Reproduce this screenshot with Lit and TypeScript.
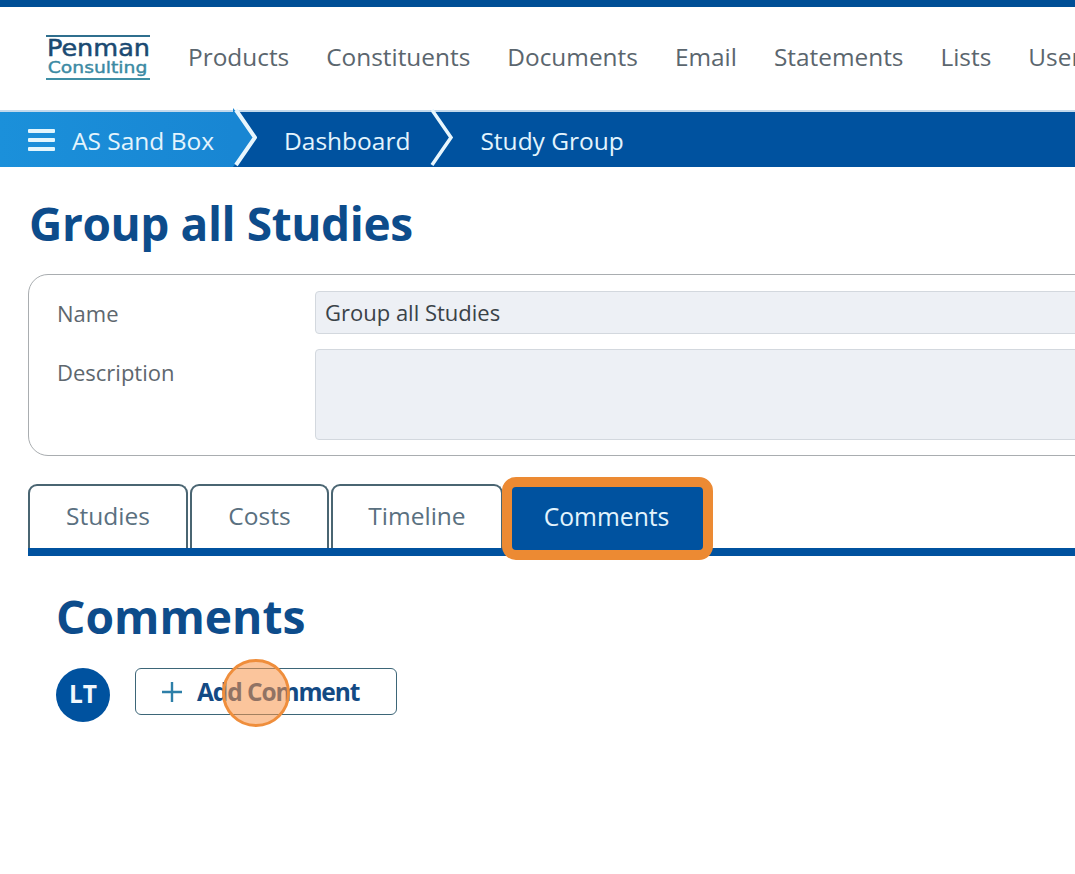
import { LitElement, html, css } from "lit";
import { customElement } from "lit/decorators.js";

@customElement("app-root")
export class AppRoot extends LitElement {
  static styles = css`
    :host { display: block; width: 1075px; height: 874px; overflow: hidden; position: relative; background: #fff; font-family: "Open Sans", sans-serif; }
    .page { width: 1400px; }
    .top { height: 7px; background: #004f96; }
    .head { height: 103px; display: flex; align-items: center; padding-left: 46px; gap: 37px; border-bottom: 2px solid #c3d9ec; }
    .logo { width: 104px; margin-right: 1px; display: flex; flex-direction: column; align-items: center; border-top: 2px solid #2f6f8e; border-bottom: 2px solid #3f8fa5; height: 45px; box-sizing: border-box; margin-top: -3px; overflow: hidden; }
    .logo .a { display: block; font: 400 23px/22px "DejaVu Sans", sans-serif; color: #1b4a72; -webkit-text-stroke: .5px #1b4a72; transform: scaleX(1.11); white-space: nowrap; }
    .logo .b { display: block; font: 400 16px/17px "DejaVu Sans", sans-serif; color: #3b8aa3; -webkit-text-stroke: .4px #3b8aa3; transform: scaleX(1.17); white-space: nowrap; }
    .nav { font-size: 24.4px; line-height: 30px; color: #5b666e; white-space: nowrap; margin-top: -3px; }
    .crumbs { height: 55px; display: flex; background: #00529f; color: #e3f4fd; font-size: 24.5px; align-items: center; }
    .crumbs span { padding-top: 2px; }
    .root { height: 100%; width: 233px; background: linear-gradient(90deg, #1b90da, #1886d3); display: flex; align-items: center; padding-left: 28px; box-sizing: border-box; gap: 17px; }
    .burger { width: 27px; height: 22px; display: flex; flex-direction: column; justify-content: space-between; }
    .burger i { display: block; height: 4px; background: #e3f6fd; border-radius: 1px; }
    .chev { width: 24px; height: 59px; margin-top: -4px; flex: none; display: block; }
    .c1 { margin-left: 27px; }
    .c2 { margin-left: 20px; }
    .c3 { margin-left: 26px; }
    h1 { margin: 28px 0 0 29px; font-size: 46px; line-height: 56px; font-weight: 700; color: #0d4c8b; letter-spacing: -.4px; }
    .card { margin: 23px 0 0 28px; height: 182px; box-sizing: border-box; border: 1.5px solid #a9adb0; border-radius: 20px; display: grid; grid-template-columns: 258px 1fr; grid-template-rows: 43px 91px; row-gap: 15px; padding: 15.5px 0 0 28px; }
    .lbl { font-size: 22px; color: #5e676e; line-height: 44px; }
    .inp { background: #edf0f5; border: 1px solid #d3d8de; border-radius: 4px; font-size: 22px; color: #3a4248; padding-left: 9px; line-height: 41px; }
    .lbl.d { line-height: 46px; }
    .tabs { margin: 28px 0 0 28px; display: flex; align-items: flex-end; border-bottom: 8px solid #00529f; height: 64px; }
    .tab { height: 64px; box-sizing: border-box; border: 2px solid #4a6572; border-bottom: none; border-radius: 9px 9px 0 0; display: flex; align-items: center; justify-content: center; font-size: 24.5px; color: #5a7080; margin-right: 2px; padding-bottom: 4px; }
    .t1 { width: 160px; } .t2 { width: 139px; margin-right: 2px; } .t3 { width: 172px; margin-right: -1px; }
    .active { width: 211px; height: 83px; background: #00529f; border: 10px solid #ec8a33; border-radius: 14px; color: #e3f4fd; display: flex; align-items: center; justify-content: center; font-size: 24.7px; position: relative; padding: 0 2px 5px 0; box-sizing: border-box; margin-bottom: -12px; }
    h2 { margin: 30px 0 0 56px; font-size: 46.2px; line-height: 62px; font-weight: 700; color: #0d4c8b; }
    .row { margin: 20px 0 0 56px; display: flex; align-items: flex-start; gap: 25px; }
    .av { width: 54px; height: 54px; border-radius: 50%; background: #00529f; color: #f2f8fc; display: flex; align-items: center; justify-content: center; font-weight: 700; font-size: 24.5px; padding-bottom: 3px; box-sizing: border-box; }
    .btn { width: 262px; height: 47px; box-sizing: border-box; border: 1.5px solid #3d6678; border-radius: 6px; display: flex; align-items: center; padding-left: 25px; gap: 14px; font-size: 24.5px; font-weight: 700; color: #134a84; letter-spacing: -1.1px; }
    .btn svg { width: 22px; height: 22px; flex: none; }
    .pulse { position: absolute; left: 222px; top: 659px; width: 68px; height: 68px; box-sizing: border-box; border-radius: 50%; border: 3px solid #ef8e3c; background: rgba(247, 150, 75, .55); }
  `;

  render() {
    return html`
      <div class="page">
        <div class="top"></div>
        <div class="head">
          <div class="logo"><span class="a">Penman</span><span class="b">Consulting</span></div>
          ${["Products", "Constituents", "Documents", "Email", "Statements", "Lists", "Users"].map((n) => html`<span class="nav">${n}</span>`)}
        </div>
        <div class="crumbs">
          <div class="root">
            <div class="burger"><i></i><i></i><i></i></div>
            <span>AS Sand Box</span>
          </div>
          <svg class="chev" viewBox="0 0 24 59"><path d="M0 0 L24 29.5 L0 59 Z" fill="#1886d3"/><path d="M3 2 L22 29.5 L3 57" fill="none" stroke="#e8f6fd" stroke-width="4"/></svg>
          <span class="c1">Dashboard</span>
          <svg class="chev c2" viewBox="0 0 24 59"><path d="M2 2 L21 29.5 L2 57" fill="none" stroke="#e8f6fd" stroke-width="3.5"/></svg>
          <span class="c3">Study Group</span>
        </div>
        <h1>Group all Studies</h1>
        <div class="card">
          <div class="lbl">Name</div>
          <div class="inp">Group all Studies</div>
          <div class="lbl d">Description</div>
          <div class="inp"></div>
        </div>
        <div class="tabs">
          <div class="tab t1">Studies</div>
          <div class="tab t2">Costs</div>
          <div class="tab t3">Timeline</div>
          <div class="active">Comments</div>
        </div>
        <h2>Comments</h2>
        <div class="row">
          <div class="av">LT</div>
          <div class="btn">
            <svg viewBox="0 0 22 22"><path d="M11 1V21M1 11H21" stroke="#2d7fa8" stroke-width="2.4" fill="none"/></svg>
            <span>Add Comment</span>
          </div>
        </div>
      </div>
      <div class="pulse"></div>
    `;
  }
}
